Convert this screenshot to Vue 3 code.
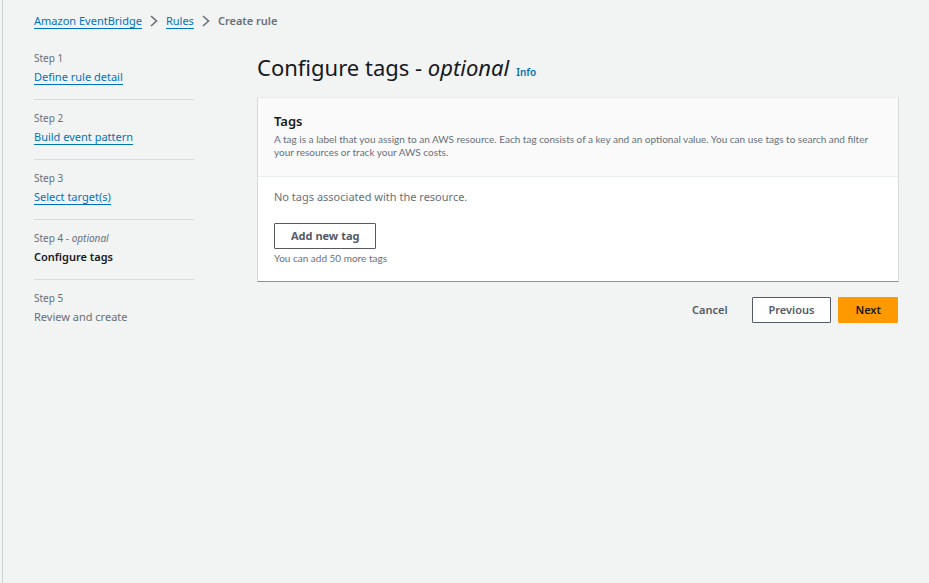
<script setup>
const crumbs = [
  { label: 'Amazon EventBridge', href: '#eventbridge' },
  { label: 'Rules', href: '#rules' },
]

const steps = [
  { number: 1, title: 'Define rule detail', state: 'done', href: '#step-1' },
  { number: 2, title: 'Build event pattern', state: 'done', href: '#step-2' },
  { number: 3, title: 'Select target(s)', state: 'done', href: '#step-3' },
  { number: 4, title: 'Configure tags', state: 'current', optional: true },
  { number: 5, title: 'Review and create', state: 'upcoming' },
]
</script>

<template>
  <div class="shell">
    <nav aria-label="Breadcrumbs">
      <ol class="breadcrumbs">
        <li v-for="crumb in crumbs" :key="crumb.label" class="crumb">
          <a class="link" :href="crumb.href">{{ crumb.label }}</a>
          <svg class="chevron" viewBox="0 0 8 12" aria-hidden="true">
            <path d="M1 1l5.5 5L1 11" />
          </svg>
        </li>
        <li class="crumb-current" aria-current="page">Create rule</li>
      </ol>
    </nav>

    <div class="wizard">
      <nav aria-label="Steps">
        <ol class="steps">
          <li v-for="step in steps" :key="step.number" class="step">
            <div class="step-label">
              Step {{ step.number }}<template v-if="step.optional"> - <em>optional</em></template>
            </div>
            <div class="step-title" :class="step.state">
              <a v-if="step.href" class="link" :href="step.href">{{ step.title }}</a>
              <span v-else>{{ step.title }}</span>
            </div>
          </li>
        </ol>
      </nav>

      <main class="content">
        <header class="heading">
          <h1>Configure tags - <em>optional</em></h1>
          <a class="info" href="#info">Info</a>
        </header>

        <section class="card">
          <header class="card-header">
            <h2>Tags</h2>
            <p>
              A tag is a label that you assign to an AWS resource. Each tag consists of a key and an
              optional value. You can use tags to search and filter your resources or track your AWS
              costs.
            </p>
          </header>
          <div class="card-body">
            <p class="empty">No tags associated with the resource.</p>
            <button type="button" class="button">Add new tag</button>
            <p class="hint">You can add 50 more tags</p>
          </div>
        </section>

        <footer class="actions">
          <button type="button" class="button plain">Cancel</button>
          <button type="button" class="button">Previous</button>
          <button type="button" class="button primary">Next</button>
        </footer>
      </main>
    </div>
  </div>
</template>

<style>
body {
  background: #f2f3f3;
}
</style>

<style scoped>
.shell {
  box-sizing: border-box;
  min-height: 100vh;
  margin-left: 2px;
  padding: 12px 30px 12px 31px;
  border-left: 1px solid #cdd3d3;
  background: #f2f3f3;
  color: #687078;
  font-family: "Noto Sans", "Open Sans", sans-serif;
  font-size: 11px;
  line-height: 18px;
}

h1,
h2,
p,
ol {
  margin: 0;
  padding: 0;
}

ol {
  list-style: none;
}

.link {
  display: inline-block;
  border-bottom: 1px solid #0073bb;
  color: #0073bb;
  line-height: 15px;
  text-decoration: none;
}

.breadcrumbs,
.crumb {
  display: flex;
  align-items: center;
}

.chevron {
  width: 8px;
  height: 12px;
  margin: 0 8px;
  fill: none;
  stroke: #687078;
  stroke-width: 1.6;
}

.crumb-current {
  font-weight: 600;
}

.wizard {
  display: grid;
  grid-template-columns: 160px minmax(0, 1fr);
  column-gap: 63px;
  padding-top: 19px;
}

.step {
  padding-bottom: 12px;
}

.step + .step {
  padding-top: 9px;
  border-top: 1px solid #d5dbdb;
}

.step-label {
  font-size: 10px;
}

.step-title {
  line-height: 20px;
}

.current {
  color: #16191f;
  font-weight: 600;
}

.heading {
  display: flex;
  align-items: baseline;
  gap: 7px;
  padding-top: 3px;
}

h1 {
  color: #16191f;
  font-size: 22px;
  font-weight: 400;
  line-height: 30px;
}

.info {
  color: #0073bb;
  font-size: 10px;
  font-weight: 600;
  text-decoration: none;
}

.card {
  margin-top: 15px;
  border: 1px solid #d5dbdb;
  border-top-color: #eaeded;
  border-bottom-color: #879596;
  background: #fff;
}

.card-header {
  padding: 13px 16px 17px;
  border-bottom: 1px solid #eaeded;
  background: #fafafa;
}

h2 {
  color: #16191f;
  font-size: 13px;
  font-weight: 600;
  line-height: 20px;
}

.card-header p {
  margin-top: 2px;
  font-family: Lato, "Noto Sans", sans-serif;
  font-size: 10px;
  line-height: 13px;
}

.card-body {
  padding: 11px 16px 15px;
}

.empty {
  margin-bottom: 17px;
}

.hint {
  padding-top: 1px;
  font-family: Lato, "Noto Sans", sans-serif;
  font-size: 10px;
  line-height: 16px;
}

.button {
  display: block;
  box-sizing: border-box;
  height: 26px;
  padding: 0 16px;
  border: 1px solid #545b64;
  border-radius: 1px;
  background: #fff;
  color: #545b64;
  font: inherit;
  font-weight: 700;
  cursor: pointer;
}

.actions .button {
  font-weight: 600;
}

.actions .plain {
  border-color: transparent;
  background: transparent;
}

.actions .primary {
  border-color: #ff9900;
  background: #ff9900;
  color: #16191f;
}

.actions {
  display: flex;
  justify-content: flex-end;
  gap: 7px;
  padding: 15px 1px 0 0;
}
</style>
